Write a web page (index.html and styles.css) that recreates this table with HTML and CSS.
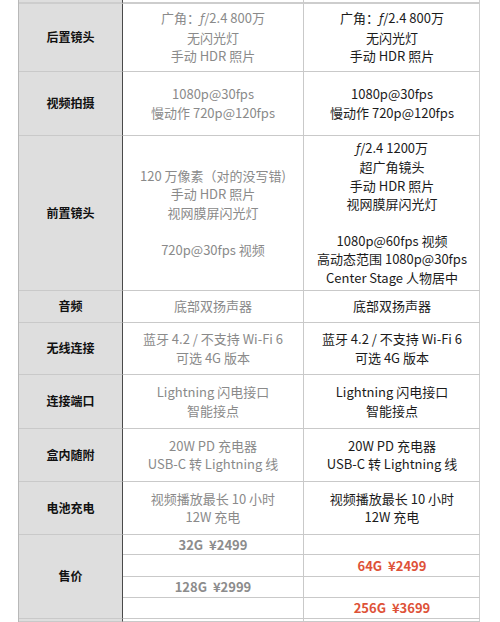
FILE: index.html
```html
<!DOCTYPE html>
<html lang="zh-CN">
<head>
<meta charset="utf-8">
<title>参数对比</title>
<link rel="stylesheet" href="styles.css">
</head>
<body>
<div class="sheet">
  <div class="cell label stub"></div>
  <div class="cell old stub"></div>
  <div class="cell new stub"></div>

  <div class="cell label"><p>后置镜头</p></div>
  <div class="cell old"><p>广角：<i class="f">ƒ</i>/2.4 800万<br>无闪光灯<br>手动 HDR 照片</p></div>
  <div class="cell new"><p>广角：<i class="f">ƒ</i>/2.4 800万<br>无闪光灯<br>手动 HDR 照片</p></div>

  <div class="cell label"><p>视频拍摄</p></div>
  <div class="cell old"><p>1080p@30fps<br>慢动作 720p@120fps</p></div>
  <div class="cell new"><p>1080p@30fps<br>慢动作 720p@120fps</p></div>

  <div class="cell label"><p>前置镜头</p></div>
  <div class="cell old"><p>120 万像素（对的没写错)<br>手动 HDR 照片<br>视网膜屏闪光灯<br>&nbsp;<br>720p@30fps 视频</p></div>
  <div class="cell new"><p><i class="f">ƒ</i>/2.4 1200万<br>超广角镜头<br>手动 HDR 照片<br>视网膜屏闪光灯<br>&nbsp;<br>1080p@60fps 视频<br>高动态范围 1080p@30fps<br>Center Stage 人物居中</p></div>

  <div class="cell label"><p>音频</p></div>
  <div class="cell old"><p>底部双扬声器</p></div>
  <div class="cell new"><p>底部双扬声器</p></div>

  <div class="cell label"><p>无线连接</p></div>
  <div class="cell old"><p>蓝牙 4.2 / 不支持 Wi-Fi 6<br>可选 4G 版本</p></div>
  <div class="cell new"><p>蓝牙 4.2 / 不支持 Wi-Fi 6<br>可选 4G 版本</p></div>

  <div class="cell label"><p>连接端口</p></div>
  <div class="cell old"><p>Lightning 闪电接口<br>智能接点</p></div>
  <div class="cell new"><p>Lightning 闪电接口<br>智能接点</p></div>

  <div class="cell label"><p>盒内随附</p></div>
  <div class="cell old"><p>20W PD 充电器<br>USB-C 转 Lightning 线</p></div>
  <div class="cell new"><p>20W PD 充电器<br>USB-C 转 Lightning 线</p></div>

  <div class="cell label"><p>电池充电</p></div>
  <div class="cell old"><p>视频播放最长 10 小时<br>12W 充电</p></div>
  <div class="cell new"><p>视频播放最长 10 小时<br>12W 充电</p></div>

  <div class="cell label price-label"><p>售价</p></div>
  <div class="cell old price"><p>32G&nbsp; ¥2499</p></div>
  <div class="cell new price"></div>
  <div class="cell old price"></div>
  <div class="cell new price red"><p>64G&nbsp; ¥2499</p></div>
  <div class="cell old price"><p>128G&nbsp; ¥2999</p></div>
  <div class="cell new price"></div>
  <div class="cell old price"></div>
  <div class="cell new price red"><p>256G&nbsp; ¥3699</p></div>

  <div class="cell label"></div>
  <div class="cell old"></div>
  <div class="cell new"></div>
</div>
</body>
</html>
```

FILE: styles.css
```css
html, body {
  margin: 0;
  padding: 0;
  background: #ffffff;
}

body {
  width: 500px;
  height: 622px;
  overflow: hidden;
  font-family: "Noto Sans CJK SC", "Noto Sans", sans-serif;
}

.sheet {
  display: grid;
  grid-template-columns: 104px 181px 176px;
  grid-template-rows: 4px 68px 64px 155px 32px 52px 54px 53px 53px 20px 22px 21px 21px 3px;
  margin-left: 18px;
  width: 462px;
  border-left: 1px solid #b8b8b8;
  border-right: 1px solid #cfcfcf;
  box-sizing: border-box;
}

.cell {
  box-sizing: border-box;
  display: flex;
  align-items: center;
  justify-content: center;
  text-align: center;
  border-bottom: 1px solid #c9c9c9;
  font-size: 13px;
  line-height: 18.4px;
  overflow: hidden;
}

.cell p {
  margin: 0;
}

.stub {
  border-bottom: 2px solid #cdcdcd;
}

.label {
  background: #dedede;
  color: #111111;
  font-weight: 700;
  font-size: 12px;
  border-right: 1px solid #4a4a4a;
}

.old {
  color: #8a8a8a;
  border-right: 1px solid #c9c9c9;
}

.new {
  color: #1b1b1b;
}

.f {
  font-style: italic;
  font-family: "DejaVu Sans", sans-serif;
  font-size: 12px;
}

.price-label {
  grid-row: span 4;
}

.price {
  font-weight: 700;
  font-size: 13px;
  line-height: 16px;
}

.old.price {
  color: #8c8c8c;
}

.red {
  color: #de5238;
}
```
